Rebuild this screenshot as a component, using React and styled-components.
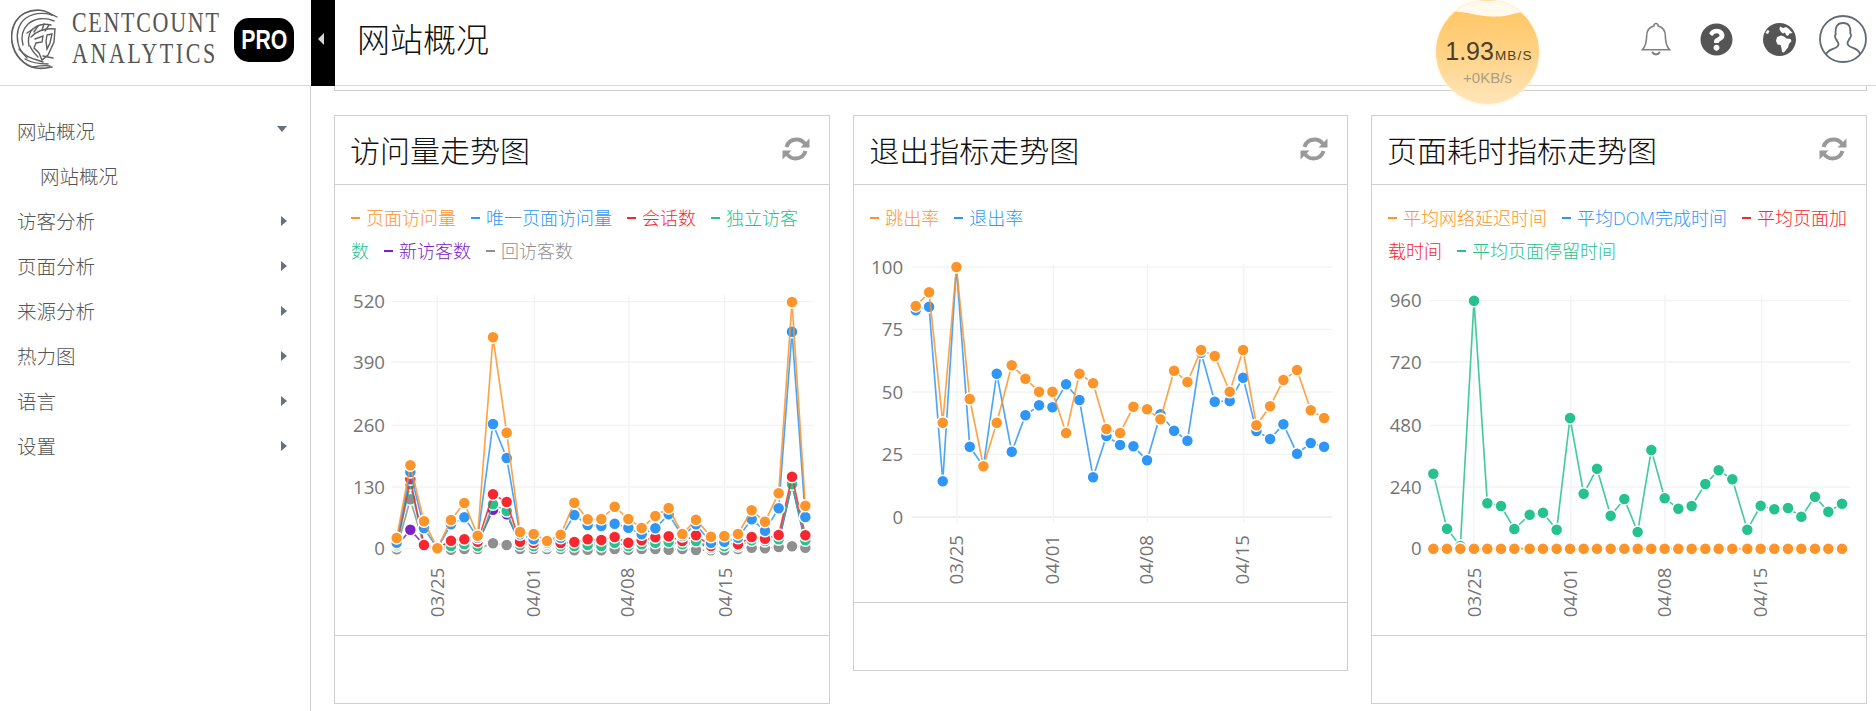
import React from "react";
import styled, { createGlobalStyle } from "styled-components";
import { FaQuestionCircle } from "react-icons/fa";

const FONT = '"Open Sans", "Noto Sans CJK SC", sans-serif';

const Global = createGlobalStyle`
  html, body { margin: 0; padding: 0; background: #fff; overflow: hidden; }
  body { font-family: ${FONT}; }
  * { box-sizing: border-box; }
`;

const Page = styled.div`
  position: relative;
  width: 1876px;
  height: 711px;
  overflow: hidden;
  display: flex;
  flex-direction: column;
`;

const TopBar = styled.header`
  height: 86px;
  flex: none;
  display: flex;
  align-items: stretch;
  border-bottom: 1px solid #d8d8d8;
`;

const Brand = styled.div`
  width: 311px;
  flex: none;
  display: flex;
  align-items: center;
  padding: 0 0 6px 11px;
`;

const BrandText = styled.div`
  width: 146px;
  margin: 0 0 3px 13px;
  display: flex;
  flex-direction: column;
  font-family: "Liberation Serif", serif;
  font-size: 22px;
  line-height: 31px;
  color: #555;
`;

const BrandLine = styled.span`
  white-space: nowrap;
  display: block;
  letter-spacing: ${(p) => p.$track}px;
  transform: scaleY(1.3);
`;

const ProBadge = styled.div`
  margin-left: 16px;
  width: 60px;
  height: 44px;
  border-radius: 15px;
  background: #000;
  display: flex;
  align-items: center;
  justify-content: center;
`;

const ProText = styled.span`
  color: #fff;
  font-family: "Liberation Sans", sans-serif;
  font-weight: 700;
  font-size: 28px;
  display: inline-block;
  transform: scaleX(0.76);
`;

const Collapse = styled.button`
  width: 24px;
  flex: none;
  height: 86px;
  border: 0;
  padding: 0 4px 8px 0;
  background: #000;
  display: flex;
  align-items: center;
  justify-content: center;
  &::before {
    content: "";
    border-style: solid;
    border-width: 6px 6px 6px 0;
    border-color: transparent #d6d6d6 transparent transparent;
  }
`;

const PageTitle = styled.h1`
  margin: 0 0 0 22px;
  font-size: 33px;
  font-weight: 300;
  line-height: 80px;
  color: #111;
  flex: 1;
`;

const Tools = styled.div`
  display: flex;
  align-items: center;
  padding-bottom: 7px;
  padding-right: 9px;
  color: #555;
`;

const ToolSlot = styled.span`
  display: flex;
  margin-left: ${(p) => p.$gap}px;
`;

const Bubble = styled.div`
  position: absolute;
  left: 1436px;
  top: 0;
  width: 103px;
  height: 104px;
  border-radius: 50%;
  overflow: hidden;
  background: linear-gradient(#ffc766 10%, #ffd285 50%, #ffe6ba 100%);
  box-shadow: 0 0 3px 1px #fff5e2;
  display: flex;
  flex-direction: column;
  align-items: center;
  padding-top: 37px;
`;

const BubbleWave = styled.svg`
  position: absolute;
  left: 0;
  top: 0;
`;

const SpeedRow = styled.div`
  position: relative;
  display: flex;
  align-items: baseline;
  color: #4a3f2a;
  font-family: "Liberation Sans", sans-serif;
  font-size: 25px;
  line-height: 28px;
  margin-left: 3px;
  white-space: nowrap;
`;

const SpeedUnit = styled.span`
  font-size: 13.5px;
  letter-spacing: 1.2px;
  margin-left: 1px;
`;

const SpeedDelta = styled.div`
  position: relative;
  font-family: "Liberation Sans", sans-serif;
  font-size: 15px;
  line-height: 18px;
  margin-top: -1px;
  color: #a99f86;
`;

const Body = styled.div`
  flex: 1;
  display: flex;
  min-height: 0;
`;

const Sidebar = styled.nav`
  width: 311px;
  flex: none;
  border-right: 1px solid #cfcfcf;
  padding-top: 22px;
`;

const MenuRow = styled.div`
  height: 45px;
  display: flex;
  align-items: center;
  justify-content: space-between;
  padding-left: ${(p) => (p.$sub ? 40 : 17)}px;
  padding-right: 23px;
  font-size: 19.5px;
  font-weight: 300;
  color: #555;
`;

const Caret = styled.i`
  width: 0;
  height: 0;
  border-style: solid;
  border-color: transparent;
  ${(p) =>
    p.$open
      ? `border-width: 6px 5px 0 5px; border-top-color: #68717d; margin-bottom: 4px;`
      : `border-width: 5px 0 5px 6px; border-left-color: #68717d;`}
`;

const Main = styled.main`
  flex: 1;
  min-width: 0;
  padding: 0 9px 0 23px;
`;

const CutBox = styled.div`
  height: 5px;
  border: 1px solid #cfcfcf;
  border-top: 0;
`;

const Cards = styled.div`
  margin-top: 24px;
  display: grid;
  grid-template-columns: 496px 494.5px 496px;
  column-gap: 23.25px;
  align-items: start;
`;

const Card = styled.section`
  border: 1px solid #cfcfcf;
  background: #fff;
`;

const CardHead = styled.div`
  height: 69px;
  display: flex;
  align-items: center;
  justify-content: space-between;
  padding: 0 18px 2px 15px;
  border-bottom: 1px solid #cfcfcf;
  font-size: 30px;
  font-weight: 300;
  color: #111;
`;

const Refresh = styled.svg`
  display: block;
`;

const Legend = styled.div`
  padding: 17px 12px 0 16px;
  font-size: 18px;
  font-weight: 300;
  line-height: 33px;
`;

const LegendItem = styled.span`
  color: ${(p) => p.$color};
  margin-right: 15px;
  &::before {
    content: "";
    display: inline-block;
    width: 9px;
    height: 2px;
    margin-right: 6px;
    vertical-align: 6px;
    background: ${(p) => p.$color};
  }
`;

const ChartSvg = styled.svg`
  display: block;
  width: 100%;
  height: 367px;
`;

const CardFoot = styled.div`
  height: 68px;
  border-top: 1px solid #cfcfcf;
`;

const C = {
  orange: "#fd9429",
  blue: "#2f96f7",
  red: "#f7262f",
  green: "#25c28d",
  purple: "#7a22c8",
  gray: "#8f8f8f",
};

const chart1 = {
  view: "15 -9 1482 1101",
  xs: [200,241,282,322,363,403,443,489,530,570,611,651,692,733,773,814,854,895,935,976,1016,1057,1098,1143,1183,1224,1265,1305,1346,1386,1426],
  x0: 185, x1: 1450, top: 72, labelX: 165, labelY: 890, base: 848,
  yTicks: [["520",92],["390",273],["260",463],["130",648],["0",833]],
  xTicks: [["03/25",322,322],["04/01",613,610],["04/08",897,893],["04/15",1184,1185]],
  series: [
    [C.purple,[826,776,822,832,820,815,818,716,730,816,816,818,816,818,818,818,815,820,818,815,818,818,820,826,822,820,812,815,814,640,815]],
    [C.gray,[835,685,825,832,836,834,834,817,822,834,834,834,834,838,836,838,834,836,834,834,836,834,837,838,838,834,830,832,828,826,830]],
    [C.green,[825,640,822,832,825,820,825,700,720,822,825,825,825,825,822,825,815,825,820,815,812,820,810,830,825,825,808,810,805,640,808]],
    [C.red,[820,625,822,832,809,805,812,670,693,812,815,820,816,813,805,807,798,815,808,799,796,810,793,825,815,820,798,803,792,617,793]],
    [C.blue,[815,603,771,832,760,739,800,459,561,790,805,815,800,732,762,765,758,770,790,772,730,795,760,815,812,800,745,779,712,182,738]],
    [C.orange,[801,583,751,832,747,696,794,199,485,783,789,810,791,695,745,744,707,744,771,735,711,789,746,797,795,789,718,752,667,93,704]],
  ],
};

const chart2 = {
  view: "12.75 -18 1477.5 1101",
  xs: [198,238,279,320,360,401,441,486,527,568,608,649,689,730,770,811,851,892,932,973,1013,1054,1095,1140,1180,1220,1261,1301,1342,1383,1423],
  x0: 185, x1: 1448, top: 68, labelX: 160, labelY: 882, base: 846, strongBase: true,
  yTicks: [["100",78],["75",265],["50",453],["25",640],["0",828]],
  xTicks: [["03/25",322,320],["04/01",611,608],["04/08",893,890],["04/15",1182,1178]],
  series: [
    [C.blue,[208,197,721,78,617,676,398,632,523,493,499,430,477,709,585,612,616,658,520,569,599,335,482,480,410,570,594,550,638,606,617]],
    [C.orange,[195,154,545,78,474,676,545,373,413,452,452,576,398,427,564,576,497,505,535,389,423,327,345,452,327,553,496,417,387,508,531]],
  ],
};

const chart3 = {
  view: "6 -9 1482 1101",
  xs: [190,231,271,312,352,393,433,479,519,560,600,641,681,722,763,803,844,884,925,965,1006,1046,1087,1132,1172,1213,1254,1294,1335,1375,1416],
  x0: 178, x1: 1440, top: 72, labelX: 155, labelY: 890, base: 846,
  yTicks: [["960",89],["720",273],["480",463],["240",648],["0",833]],
  xTicks: [["03/25",312,312],["04/01",602,600],["04/08",885,884],["04/15",1175,1172]],
  series: [
    [C.green,[608,773,825,89,697,705,774,731,725,776,441,668,593,734,684,783,537,682,713,705,639,598,625,776,704,715,711,737,677,722,698]],
    [C.orange,new Array(31).fill(833)],
  ],
};

function Chart({ data }) {
  return (
    <ChartSvg viewBox={data.view} preserveAspectRatio="none">
      {data.yTicks.map(([label, y], i) => (
        <g key={label}>
          <line
            x1={data.x0}
            x2={data.x1}
            y1={y}
            y2={y}
            stroke={data.strongBase && i === 4 ? "#ebebeb" : "#f3f3f3"}
            strokeWidth={data.strongBase && i === 4 ? 5 : 4}
          />
          <text x={data.labelX} y={y + 20} textAnchor="end" fontSize="56" fill="#747474" fontFamily={FONT}>
            {label}
          </text>
        </g>
      ))}
      {data.xTicks.map(([label, gx, lx]) => (
        <g key={label}>
          <line x1={gx} x2={gx} y1={data.top} y2={data.base} stroke="#f3f3f3" strokeWidth="4" />
          <text
            transform={`translate(${lx + 20} ${data.labelY}) rotate(-90)`}
            textAnchor="end"
            fontSize="56"
            fill="#747474"
            fontFamily={FONT}
          >
            {label}
          </text>
        </g>
      ))}
      {data.series.map(([color, ys], s) => (
        <g key={s}>
          <polyline
            fill="none"
            stroke={color}
            strokeOpacity="0.85"
            strokeWidth="5"
            points={ys.map((y, i) => `${data.xs[i]},${y}`).join(" ")}
          />
          {ys.map((y, i) => (
            <circle key={i} cx={data.xs[i]} cy={y} r="18" fill={color} stroke="#fff" strokeWidth="4.5" />
          ))}
        </g>
      ))}
    </ChartSvg>
  );
}

const Logo = () => (
  <svg width="48" height="62" viewBox="0 0 48 62" fill="none" stroke="#5f5f5f" strokeWidth="1.4" strokeLinecap="round">
    <path d="M41 6C35 1 24-1 14 4 4 9-1 21 1 33c2 13 12 24 24 26 5 1 11 0 16-1" strokeWidth="1.7" />
    <path d="M46 8C37 3 24 3 15 9 7 15 5 25 7 34c1 6 5 11 9 15" />
    <path d="M43 12C34 8 24 9 17 15 11 21 10 29 12 36" />
    <path d="M40 16c-8-2-15 0-20 6-3 5-3 10-2 15" />
    <path d="M22 20l-6 4M27 17l-4 6M33 15l-2 6M38 16l-4 6" />
    <path d="M20 28c6-6 14-9 24-8l-1 13-6 13-6 5-3-7-5-5 2-5 6-1 1-6-8 3" />
    <path d="M36 26l5-1-2 9-3 6-1-8z" />
    <path d="M8 40c7 9 16 10 24 13M14 50c7 4 14 5 23 5M19 37c2 5 5 8 8 11M42 49l-10-2" />
    <path d="M22 58c6-1 12-2 17-1" />
  </svg>
);

const Bell = () => (
  <svg width="30" height="34" viewBox="0 0 32 36" fill="none" stroke="#808080" strokeWidth="1.7">
    <path d="M16 1.5a2.2 2.2 0 0 1 2.2 2.6C23.400 5.300 26 9.500 26 15c0 7 1.500 11 4.500 14.500h-29C4.500 26 6 22 6 15c0-5.500 2.600-9.700 7.800-10.900A2.200 2.200 0 0 1 16 1.500z" />
    <path d="M12.500 32.500c1 2.500 6 2.500 7 0" strokeWidth="2.400" strokeLinecap="round" />
  </svg>
);

const Globe = () => (
  <svg width="33" height="33" viewBox="0 0 33 33">
    <circle cx="16.500" cy="16.500" r="16.500" fill="#555" />
    <path d="M17 3.500l3 1.500 3-1 3 2 3.500 4-3 .5-1.500 2.500-2-1-1-2.500-2 1-2-1.500-1.500-2.500z" fill="#fff" />
    <path d="M14 14l4-1.500 3 1 2.500 2 4 .5 1 2-2.500 3-1 3.500-2.500 3-1.500 2-2-.5-.5-4-1-3-3-.5-1.500-3.500z" fill="#fff" />
    <path d="M2.500 10l2-3 2 1-1.500 3z" fill="#fff" />
  </svg>
);

const Avatar = () => (
  <svg width="48" height="48" viewBox="0 0 48 48" fill="none" stroke="#626b73" strokeWidth="1.8">
    <circle cx="24" cy="24" r="23" />
    <path d="M7 40c1-4 4-5 8-6.500 3-1.100 4.500-2.500 4.500-4.500 0-1.500-1.500-3-2.500-5-.7-.4-1-2-1-3 0-1 .2-1.500.7-1.700C16 12 18 8 24 8s8 4 7.300 10.300c.5.200.7.700.7 1.700s-.3 2.600-1 3c-1 2-2.500 3.500-2.500 5 0 2 1.500 3.400 4.500 4.500 4 1.500 7 2.500 8 6.500" />
  </svg>
);

const RefreshIcon = () => (
  <Refresh width="30" height="26" viewBox="0 0 30 26" fill="none" stroke="#999" strokeWidth="4">
    <path d="M5.500 11C7 6 11 3.500 15.500 3.500c3.500 0 6.500 1.500 8.500 4.500" />
    <path d="M24.500 15c-1.500 5-5.500 7.500-10 7.500-3.500 0-6.500-1.500-8.500-4.500" />
    <path d="M28.500 2.500v9h-9z" fill="#999" stroke="none" />
    <path d="M1.500 23.500v-9h9z" fill="#999" stroke="none" />
  </Refresh>
);

const menu = [
  ["网站概况", "open"],
  ["网站概况", "sub"],
  ["访客分析"],
  ["页面分析"],
  ["来源分析"],
  ["热力图"],
  ["语言"],
  ["设置"],
];

const cards = [
  {
    title: "访问量走势图",
    chart: chart1,
    legend: [["页面访问量", C.orange], ["唯一页面访问量", C.blue], ["会话数", C.red], ["独立访客数", C.green], ["新访客数", C.purple], ["回访客数", C.gray]],
  },
  {
    title: "退出指标走势图",
    chart: chart2,
    legend: [["跳出率", C.orange], ["退出率", C.blue]],
  },
  {
    title: "页面耗时指标走势图",
    chart: chart3,
    legend: [["平均网络延迟时间", C.orange], ["平均DOM完成时间", C.blue], ["平均页面加载时间", C.red], ["平均页面停留时间", C.green]],
  },
];

export default function App() {
  return (
    <Page>
      <Global />
      <TopBar>
        <Brand>
          <Logo />
          <BrandText>
            <BrandLine $track={1.7}>CENTCOUNT</BrandLine>
            <BrandLine $track={2.6}>ANALYTICS</BrandLine>
          </BrandText>
          <ProBadge>
            <ProText>PRO</ProText>
          </ProBadge>
        </Brand>
        <Collapse aria-label="collapse" />
        <PageTitle>网站概况</PageTitle>
        <Tools>
          <ToolSlot $gap={0}><Bell /></ToolSlot>
          <ToolSlot $gap={29}><FaQuestionCircle size={33} /></ToolSlot>
          <ToolSlot $gap={30}><Globe /></ToolSlot>
          <ToolSlot $gap={23}><Avatar /></ToolSlot>
        </Tools>
      </TopBar>
      <Bubble>
        <BubbleWave width="103" height="104" viewBox="0 0 105 105">
          <path d="M0 0H105V12C95 10 88 11 78 14 68 17 56 17 44 15 32 13 20 9 0 12Z" fill="#fff9ee" />
        </BubbleWave>
        <SpeedRow>1.93<SpeedUnit>MB/S</SpeedUnit></SpeedRow>
        <SpeedDelta>+0KB/s</SpeedDelta>
      </Bubble>
      <Body>
        <Sidebar>
          {menu.map(([label, kind], i) => (
            <MenuRow key={i} $sub={kind === "sub"}>
              {label}
              {kind !== "sub" && <Caret $open={kind === "open"} />}
            </MenuRow>
          ))}
        </Sidebar>
        <Main>
          <CutBox />
          <Cards>
            {cards.map((c) => (
              <Card key={c.title}>
                <CardHead>
                  {c.title}
                  <RefreshIcon />
                </CardHead>
                <Legend>
                  {c.legend.map(([label, color]) => (
                    <LegendItem key={label} $color={color}>{label}</LegendItem>
                  ))}
                </Legend>
                <Chart data={c.chart} />
                <CardFoot />
              </Card>
            ))}
          </Cards>
        </Main>
      </Body>
    </Page>
  );
}
